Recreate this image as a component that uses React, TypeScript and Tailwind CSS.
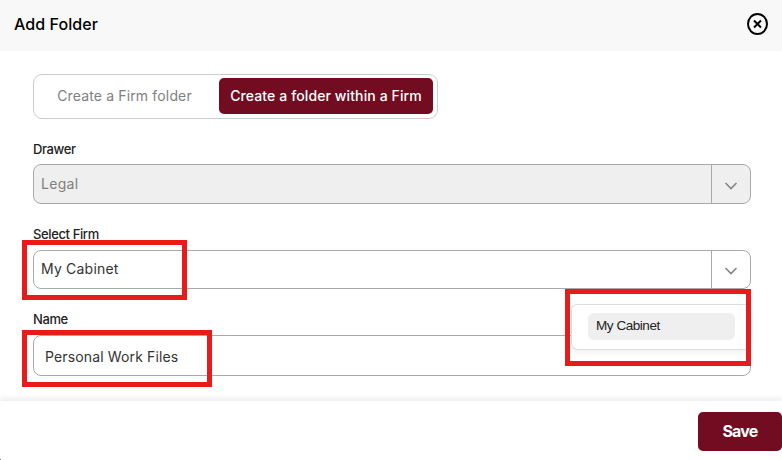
import type { ReactNode } from "react";

function FieldLabel({ children }: { children: ReactNode }) {
  return (
    <label className="block h-[20px] text-[13px] leading-[19px] font-medium tracking-[-0.38px] text-[#222]">
      {children}
    </label>
  );
}

function Chevron() {
  return (
    <span className="flex w-[39px] items-center justify-center border-l border-[#a9a9a9]">
      <svg className="mt-[3px]" width="14" height="8" viewBox="0 0 14 8" fill="none" stroke="#858585" strokeWidth="1.6">
        <path d="M1.5 1 L7 6.5 L12.5 1" />
      </svg>
    </span>
  );
}

export default function App() {
  return (
    <div className="relative flex h-[460px] w-[782px] flex-col overflow-hidden bg-white font-['Inter',sans-serif]">
      <header className="flex h-[51px] shrink-0 items-center justify-between bg-[#f8f8f8] pr-[14px] pl-[14px]">
        <h1 className="pb-[4px] text-[16px] leading-6 font-medium tracking-[0.08px] text-black">Add Folder</h1>
        <button className="mb-[3px]" aria-label="Close">
          <svg width="21" height="22" viewBox="0 0 21 22" fill="none" stroke="#000" strokeWidth="2">
            <ellipse cx="10.5" cy="11" rx="9.5" ry="10" />
            <path d="M7 7.5 L14 14.5 M14 7.5 L7 14.5" />
          </svg>
        </button>
      </header>

      <main className="h-[350px] shrink-0 px-[31px] pt-[23px] pl-[33px]">
        <div className="flex h-[45px] w-[405px] rounded-[9px] border border-[#ccc] py-[3px] pr-1 text-[14px]">
          <button className="w-[185px] pr-[4px] pb-[2px] tracking-[0.15px] text-[#808080]">Create a Firm folder</button>
          <button className="h-9 w-[214px] rounded-[5px] bg-[#720c20] pb-[2px] font-medium tracking-[0.11px] whitespace-nowrap text-white">
            Create a folder within a Firm
          </button>
        </div>

        <div className="mt-[21px]">
          <FieldLabel>Drawer</FieldLabel>
          <div className="mt-1 flex h-10 w-[718px] overflow-hidden rounded-[8px] border border-[#a9a9a9] bg-[#efefef]">
            <span className="flex-1 pl-[7px] text-[14px] leading-[38px] tracking-[0.3px] text-[#808080]">Legal</span>
            <Chevron />
          </div>
        </div>

        <div className="mt-[21px]">
          <FieldLabel>Select Firm</FieldLabel>
          <div className="mt-[5px] flex h-[39px] w-[718px] overflow-hidden rounded-[8px] border border-[#a9a9a9]">
            <span className="flex-1 pl-[7px] text-[14px] leading-[36px] tracking-[0.2px] text-[#333]">My Cabinet</span>
            <Chevron />
          </div>
        </div>

        <div className="mt-[21px]">
          <FieldLabel>Name</FieldLabel>
          <div className="mt-[5px] h-[41px] w-[718px] rounded-[8px] border border-[#a9a9a9] pl-[11px] text-[14px] leading-[42px] tracking-[0.14px] text-[#333]">
            Personal Work Files
          </div>
        </div>
      </main>

      <footer className="flex h-[59px] shrink-0 justify-end bg-white pt-[11px] shadow-[0_-3px_5px_rgba(0,0,0,0.07)]">
        <button className="h-[39px] w-[84px] rounded-[5px] bg-[#720c20] pb-[2px] text-[16px] font-bold tracking-[-0.8px] text-white">
          Save
        </button>
      </footer>

      <div className="absolute top-[304px] left-[571px] h-[46px] w-[178px] rounded-l-[6px] border border-r-0 border-[#ddd] bg-white pt-2 pl-4 shadow-[0_3px_6px_rgba(0,0,0,0.05)]">
        <div className="h-[27px] w-[147px] rounded-[6px] bg-[#efefef] pl-2 font-['Liberation_Sans',Arial,sans-serif] text-[13.5px] leading-[25px] tracking-[-0.45px] text-[#222]">
          My Cabinet
        </div>
      </div>

      <div className="absolute top-[240px] left-[22px] h-[60px] w-[165px] border-[5px] border-[#e81b1b]" />
      <div className="absolute top-[330px] left-[22px] h-[57px] w-[190px] border-[5px] border-[#e81b1b]" />
      <div className="absolute top-[289px] left-[565px] h-[77px] w-[186px] border-[5px] border-[#e81b1b]" />
      <div className="absolute bottom-0 left-0 h-px w-px bg-[#777]" />
    </div>
  );
}
